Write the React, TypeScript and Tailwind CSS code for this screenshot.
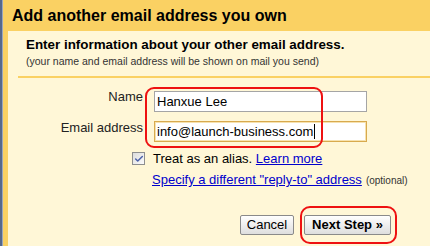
import { Check } from "lucide-react";

const font = { fontFamily: '"Liberation Sans", Arial, sans-serif' };

export default function App() {
  return (
    <div
      className="relative flex h-[246px] w-[430px] overflow-hidden bg-[#fad163] text-[13px] text-[#222]"
      style={font}
    >
      {/* window frame on the left */}
      <div className="w-[2px] bg-[#56688c]" />
      <div className="w-[1px] bg-[#9aa6bd]" />

      <div className="flex flex-1 flex-col">
        <div className="h-[31px] pl-[9px] pt-[6px] text-[16px] font-bold leading-[19px] text-black">
          Add another email address you own
        </div>

        <div className="ml-[5px] flex-1 bg-[#fff7d7] pt-[6px]">
          <div className="pl-[18px]">
            <div className="text-[13.4px] font-bold leading-[16px] text-black">
              Enter information about your other email address.
            </div>
            <div className="mt-[2px] text-[10.5px] leading-[12px] text-[#333]">
              (your name and email address will be shown on mail you send)
            </div>
          </div>

          <div className="ml-[10px] mt-[9px] h-[2px] bg-[#fad163]" />

          <div className="mt-[11px] flex flex-col">
            <div className="flex items-start">
              <div className="w-[135px] text-right leading-[15px]">Name</div>
              <input
                readOnly
                value="Hanxue Lee"
                className="ml-[11px] mt-[2px] h-[21px] w-[213px] border border-[#a5a5a5] bg-white px-[2px] text-[13px] text-black outline-none"
                style={font}
              />
            </div>
            <div className="mt-[8px] flex items-start">
              <div className="w-[135px] text-right leading-[15px]">Email address</div>
              <div className="ml-[11px] mt-[1px] flex h-[21px] w-[213px] items-center border border-[#d8aa4e] bg-white px-[2px] text-[13px] text-black shadow-[inset_0_0_0_1px_#f6e2b0]">
                <span>info@launch-business.com</span>
                <span className="ml-[1px] h-[15px] w-[1px] bg-black" />
              </div>
            </div>
          </div>

          <div className="mt-[9px] flex items-center pl-[124px]">
            <span className="flex h-[13px] w-[13px] items-center justify-center border border-[#8e8f8f] bg-gradient-to-br from-[#dcdcdc] to-[#fbfbfb]">
              <Check className="h-[10px] w-[10px] text-[#4c61a8]" strokeWidth={3.5} />
            </span>
            <span className="ml-[8px] leading-[15px] text-black">
              Treat as an alias.{" "}
              <span className="text-[#0000cc] underline">Learn more</span>
            </span>
          </div>

          <div className="mt-[6px] pl-[144px] leading-[15px]">
            <span className="text-[#0000cc] underline">
              Specify a different "reply-to" address
            </span>
            <span className="ml-[4px] text-[10px] text-[#333]">(optional)</span>
          </div>

          <div className="mt-[27px] flex justify-end gap-[10px] pr-[39px]">
            <button
              className="h-[20px] w-[54px] rounded-[2px] border border-[#8a8a8a] bg-gradient-to-b from-white to-[#dedede] text-[13px] leading-[18px] text-black"
              style={font}
            >
              Cancel
            </button>
            <button
              className="h-[20px] w-[87px] rounded-[2px] border border-[#8a8a8a] bg-gradient-to-b from-white to-[#dedede] text-[13px] font-bold leading-[18px] text-black"
              style={font}
            >
              Next Step »
            </button>
          </div>
        </div>
      </div>

      {/* red annotation marks drawn over the form */}
      <div className="pointer-events-none absolute left-[145px] top-[87px] h-[61px] w-[178px] rounded-[9px] border-2 border-[#ee1111]" />
      <div className="pointer-events-none absolute left-[300px] top-[206px] h-[38px] w-[97px] rounded-[10px] border-2 border-[#ee1111]" />
    </div>
  );
}
